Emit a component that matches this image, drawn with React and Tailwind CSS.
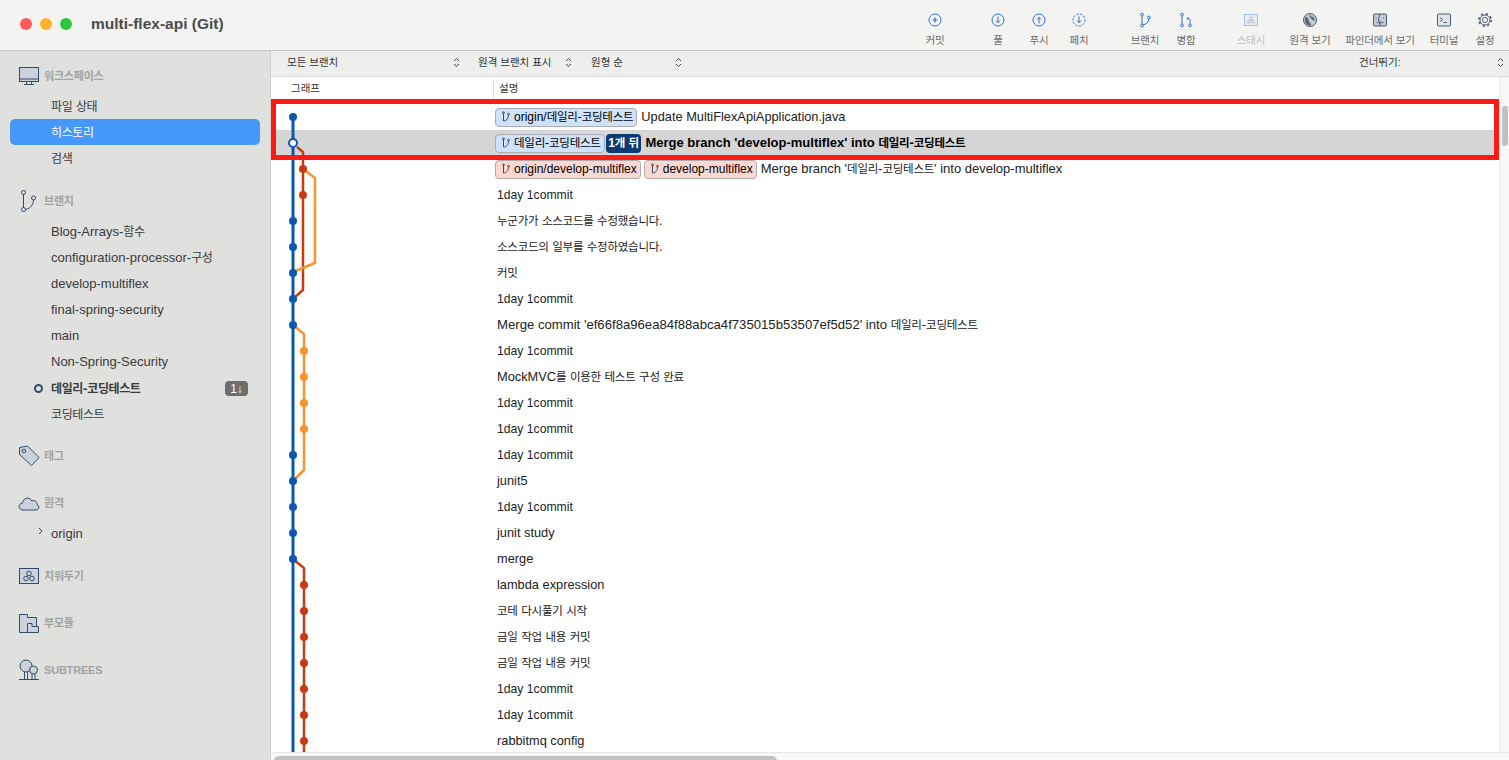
import React from "react";

const FONT = { fontFamily: '"Liberation Sans", "Noto Sans CJK KR", sans-serif' };
const NAVY = "#34496b";
const SOFT = "#ccd2dc";

const TOOLBAR = [
  { label: "커밋", icon: "commit", cls: "w-[40px]" },
  { label: "풀", icon: "pull", cls: "w-[40px] ml-[23px]" },
  { label: "푸시", icon: "push", cls: "w-[40px] ml-px" },
  { label: "페치", icon: "fetch", cls: "w-[40px]" },
  { label: "브랜치", icon: "branch", cls: "w-[40px] ml-[26px]" },
  { label: "병합", icon: "merge", cls: "w-[40px] ml-px" },
  { label: "스태시", icon: "stash", cls: "w-[40px] ml-[25px] opacity-40" },
  { label: "원격 보기", icon: "globe", cls: "w-[60px] ml-[9px]" },
  { label: "파인더에서 보기", icon: "finder", cls: "w-[72px] ml-[4px]" },
  { label: "터미널", icon: "terminal", cls: "w-[40px] ml-[8px]" },
  { label: "설정", icon: "gear", cls: "w-[40px] ml-px" },
];

const BRANCHES = [
  "Blog-Arrays-함수",
  "configuration-processor-구성",
  "develop-multiflex",
  "final-spring-security",
  "main",
  "Non-Spring-Security",
];

const COMMITS = [
  "Update MultiFlexApiApplication.java",
  "Merge branch 'develop-multiflex' into 데일리-코딩테스트",
  "Merge branch '데일리-코딩테스트' into develop-multiflex",
  "1day 1commit",
  "누군가가 소스코드를 수정했습니다.",
  "소스코드의 일부를 수정하였습니다.",
  "커밋",
  "1day 1commit",
  "Merge commit 'ef66f8a96ea84f88abca4f735015b53507ef5d52' into 데일리-코딩테스트",
  "1day 1commit",
  "MockMVC를 이용한 테스트 구성 완료",
  "1day 1commit",
  "1day 1commit",
  "1day 1commit",
  "junit5",
  "1day 1commit",
  "junit study",
  "merge",
  "lambda expression",
  "코테 다시풀기 시작",
  "금일 작업 내용 커밋",
  "금일 작업 내용 커밋",
  "1day 1commit",
  "1day 1commit",
  "rabbitmq config",
];

const BLUE_DOTS = [117, 221, 247, 273, 299, 325, 455, 481, 507, 533, 559];
const RED_DOTS = [585, 611, 637, 663, 689, 715, 741];
const ORANGE_DOTS = [351, 377, 403, 429];

// hangul runs are set tighter than the latin ones around them
const Txt = ({ text, kr = "text-[11.5px] tracking-[-0.25px]" }) => (
  <span>
    {text.split(/([\uAC00-\uD7A3]+)/).map((part, i) =>
      i % 2 === 1 ? (
        <span key={i} className={kr}>
          {part}
        </span>
      ) : (
        part
      )
    )}
  </span>
);

const ToolIcon = ({ name }) => {
  const blue = "#2a6fdb";
  const gray = "#4c5a70";
  return (
    <svg width="20" height="20" viewBox="0 0 20 20" fill="none">
      {name === "commit" && (
        <>
          <circle cx="10" cy="10" r="6" stroke={blue} />
          <path d="M7.5 10h5M10 7.5v5" stroke={blue} strokeWidth="1.2" />
        </>
      )}
      {name === "pull" && (
        <>
          <circle cx="10" cy="10" r="6" stroke={blue} />
          <path d="M10 6.5v6M8 10.5l2 2.2 2-2.2" stroke={blue} />
        </>
      )}
      {name === "push" && (
        <>
          <circle cx="10" cy="10" r="6" stroke={blue} />
          <path d="M10 13.5v-6M8 9.5l2-2.2 2 2.2" stroke={blue} />
        </>
      )}
      {name === "fetch" && (
        <>
          <circle cx="10" cy="10" r="6" stroke={blue} strokeDasharray="2.2 1.4" />
          <path d="M10 6.5v6M8 10.5l2 2.2 2-2.2" stroke={blue} />
        </>
      )}
      {name === "branch" && (
        <>
          <circle cx="7" cy="4.5" r="1.4" stroke={blue} />
          <circle cx="7" cy="15.5" r="1.4" stroke={blue} />
          <circle cx="14" cy="7.5" r="1.4" stroke={blue} />
          <path d="M7 6v8M8.2 14.8c3.4-.6 5.6-2.8 5.8-5.9" stroke={blue} />
        </>
      )}
      {name === "merge" && (
        <>
          <circle cx="6" cy="4.5" r="1.4" stroke={blue} />
          <circle cx="6" cy="15.5" r="1.4" stroke={blue} />
          <circle cx="14" cy="15.5" r="1.4" stroke={blue} />
          <path d="M6 6v8M14 14v-3.5c0-1.5-1-2-2.5-2M12.5 7L11 8.5l1.5 1.5" stroke={blue} />
        </>
      )}
      {name === "stash" && (
        <>
          <rect x="3.5" y="4.5" width="13" height="11" stroke={blue} fill="#dfe7f5" />
          <circle cx="10" cy="8.5" r="1.5" stroke={gray} strokeWidth=".8" />
          <circle cx="8" cy="11.8" r="1.5" stroke={gray} strokeWidth=".8" />
          <circle cx="12" cy="11.8" r="1.5" stroke={gray} strokeWidth=".8" />
        </>
      )}
      {name === "globe" && (
        <>
          <circle cx="10" cy="10" r="6.5" fill="#c3c8d0" stroke={gray} />
          <path d="M5 7c2 0 3.500 1 3.500 3s2 2 2.500 5.500c-2.500.5-5-1-6-3.500zM10 4c0 2 1.500 3 3.500 3 .5 1 1 2 1 3.500-2 0-3-1-3.500-2.500-1.500-.5-2-2-1-4z" fill="#5c6676" />
        </>
      )}
      {name === "finder" && (
        <>
          <rect x="3.5" y="4" width="13" height="12" rx="1" fill="#c5ccd8" stroke={gray} />
          <path d="M10 4c-1 3-1.5 5-1.5 7H10v5" stroke={gray} />
          <path d="M6 7.5v1M13.5 7.5v1M6.5 12c2 1.4 5 1.4 7 0" stroke={gray} />
        </>
      )}
      {name === "terminal" && (
        <>
          <rect x="3.5" y="4" width="13" height="12" rx="1" fill="#dfe3ea" stroke={gray} />
          <path d="M6 7.5l2.5 2-2.5 2M9.5 12.5H13" stroke={gray} />
        </>
      )}
      {name === "gear" && (
        <>
          <circle cx="10" cy="10" r="2.5" stroke={gray} />
          <circle cx="10" cy="10" r="5" stroke={gray} />
          <circle cx="10" cy="10" r="6.2" stroke={gray} strokeWidth="1.6" strokeDasharray="2.2 2.67" />
        </>
      )}
    </svg>
  );
};

const Updown = () => (
  <svg width="7" height="11" viewBox="0 0 7 11" fill="none" stroke="#444" strokeWidth="1">
    <path d="M1 4l2.5-2.5L6 4M1 7l2.5 2.5L6 7" />
  </svg>
);

const BranchGlyph = () => (
  <svg width="10" height="12" viewBox="0 0 10 12" fill="none" stroke="#3c4a60" strokeWidth="1" className="shrink-0">
    <path d="M2.5 2v8M2.5 10c3 0 5-2.5 5-6" />
    <circle cx="2.5" cy="1.8" r=".9" />
    <circle cx="7.5" cy="3.2" r=".9" />
  </svg>
);

const Badge = ({ tone, text }) => (
  <span
    className={`flex items-center gap-[3px] h-[19px] pl-[5px] pr-[3px] rounded-[4px] border border-[#a9adb3] text-[12px] text-black whitespace-nowrap ${
      tone === "red" ? "bg-[#fdd8d0]" : "bg-[#cfe2fb]"
    }`}
  >
    <BranchGlyph />
    <Txt text={text} />
  </span>
);

const SideIcon = ({ name }) => (
  <svg width="22" height="22" viewBox="0 0 22 22" fill="none" stroke={NAVY} strokeWidth="1" className="shrink-0">
    {name === "monitor" && (
      <>
        <rect x="1.5" y="2.5" width="19" height="14" fill={SOFT} />
        <path d="M1.5 14h19M8.5 16.5v3M13.5 16.5v3M6 19.5h10" />
      </>
    )}
    {name === "branch" && (
      <>
        <circle cx="5.5" cy="2.5" r="2" />
        <circle cx="5.5" cy="19.5" r="2" />
        <circle cx="15.5" cy="8" r="2" />
        <path d="M5.5 4.5v13M7.5 19.3c5-.5 7.8-4.8 8-9.3" />
      </>
    )}
    {name === "tag" && (
      <>
        <path d="M1.5 2.5l8-1.5L21 12.5l-7.5 8-12-11z" fill={SOFT} />
        <circle cx="6" cy="6" r="1.8" />
      </>
    )}
    {name === "cloud" && (
      <path d="M5 18c-5 0-5-6.5-.5-7 .5-5 7-7 9.5-2 3-1.5 5.5 1 5 3.5 3 1.5 2 5.5-1 5.5z" fill={SOFT} />
    )}
    {name === "stash" && (
      <>
        <rect x="1.5" y="3.5" width="19" height="15" fill={SOFT} />
        <circle cx="11" cy="8.5" r="2.3" />
        <circle cx="8" cy="13.5" r="2.3" />
        <circle cx="14" cy="13.5" r="2.3" />
      </>
    )}
    {name === "submodule" && (
      <>
        <path d="M1.5 2.5h8v3h9v15h-17z" fill={SOFT} />
        <path d="M9.5 14.5v-3H14v3h6.5v6h-11z" fill={SOFT} />
      </>
    )}
    {name === "tree" && (
      <>
        <circle cx="8" cy="7" r="6" fill={SOFT} />
        <circle cx="15.5" cy="11" r="4" fill={SOFT} />
        <path d="M6.5 13v7M9.5 13v7M14 15v5M17 15v5M1 20.5h20" />
      </>
    )}
  </svg>
);

const SectionHead = ({ icon, label, cls }) => (
  <div className={`flex items-center h-6 pl-[18px] gap-[4px] ${cls}`}>
    <SideIcon name={icon} />
    <span className="text-[11px] font-bold tracking-[-0.2px] text-[#a2a2a2]">{label}</span>
  </div>
);

const SideRow = ({ children, active, cls = "" }) => (
  <div
    className={`flex items-center h-[26px] mx-[10px] pl-[41px] rounded-[5px] text-[13px] ${cls} ${
      active ? "bg-[#4699fb] text-white" : "text-[#3b3b3b]"
    }`}
  >
    {children}
  </div>
);

const SideText = ({ text }) => <Txt text={text} kr="text-[12px] tracking-[-0.4px]" />;

const Sidebar = () => (
  <aside className="w-[271px] shrink-0 bg-[#e0e0de] border-r border-[#cfcfcf] pt-[13px]">
    <SectionHead icon="monitor" label="워크스페이스" />
    <div className="mt-[5px] mb-[18px]">
      <SideRow cls="pt-px">
        <SideText text="파일 상태" />
      </SideRow>
      <SideRow active cls="pt-px">
        <SideText text="히스토리" />
      </SideRow>
      <SideRow cls="pt-px">
        <SideText text="검색" />
      </SideRow>
    </div>
    <SectionHead icon="branch" label="브랜치" />
    <div className="mt-[6px]">
      {BRANCHES.map((b) => (
        <SideRow key={b}>
          <SideText text={b} />
        </SideRow>
      ))}
      <div className="relative">
        <span className="absolute left-[34px] top-[9px] size-[9px] rounded-full border-2 border-[#34496b]" />
        <SideRow cls="pt-px">
          <span className="font-bold flex-1">
            <SideText text="데일리-코딩테스트" />
          </span>
          <span className="flex items-center justify-center w-[23px] h-[15px] mr-[12px] rounded-[4px] bg-[#6e6e6e] text-white text-[12px]">
            1↓
          </span>
        </SideRow>
      </div>
      <SideRow cls="pt-px">
        <SideText text="코딩테스트" />
      </SideRow>
    </div>
    <SectionHead icon="tag" label="태그" cls="mt-[17px]" />
    <SectionHead icon="cloud" label="원격" cls="mt-[23px]" />
    <div className="relative mt-[5px]">
      <svg width="6" height="8" viewBox="0 0 6 8" fill="none" stroke={NAVY} className="absolute left-[38px] top-[7px]">
        <path d="M1 1l3 3-3 3" />
      </svg>
      <SideRow cls="pt-px">origin</SideRow>
    </div>
    <SectionHead icon="stash" label="치워두기" cls="mt-[18px]" />
    <SectionHead icon="submodule" label="부모듈" cls="mt-[23px]" />
    <SectionHead icon="tree" label="SUBTREES" cls="mt-[23px]" />
  </aside>
);

const Graph = () => (
  <svg width="60" height="648" viewBox="271 104 60 648" fill="none" className="absolute left-0 top-0">
    <path d="M293 117V752" stroke="#0b57ad" strokeWidth="3" />
    <path d="M297 147l6 5V290l-10 9" stroke="#c83a12" strokeWidth="2.5" />
    <path d="M303 169l12 9V263l-22 9" stroke="#f9922a" strokeWidth="2.5" />
    <path d="M293 325l11 9V470l-11 11" stroke="#f9922a" strokeWidth="2.5" />
    <path d="M293 559l11 9V752" stroke="#c83a12" strokeWidth="2.5" />
    {BLUE_DOTS.map((y) => (
      <circle key={y} cx="293" cy={y} r="4" fill="#0b57ad" />
    ))}
    <circle cx="293" cy="143" r="4" fill="#fff" stroke="#0b57ad" strokeWidth="2" />
    {[169, 195, ...RED_DOTS].map((y) => (
      <circle key={y} cx={y < 300 ? 303 : 304} cy={y} r="4" fill="#c83a12" />
    ))}
    {ORANGE_DOTS.map((y) => (
      <circle key={y} cx="304" cy={y} r="4" fill="#f9922a" />
    ))}
  </svg>
);

const CommitRow = ({ index, text }) => {
  // the hash and the "1day" rows run a bit wider/narrower than plain text in the original
  let size = "text-[12.8px]";
  if (text === "1day 1commit") size = "text-[12.2px]";
  if (index === 1 || index === 2) size = "text-[13px]";
  if (index === 8) size = "text-[13.15px]";

  return (
    <div
      className={`flex items-center gap-[4px] h-[26px] pl-[224px] text-[#222] whitespace-nowrap ${size} ${
        index === 1 ? "bg-[#d5d5d5] font-bold text-black" : ""
      }`}
    >
      {index === 0 && <Badge text="origin/데일리-코딩테스트" />}
      {index === 1 && (
        <span className="flex items-center font-normal">
          <Badge text="데일리-코딩테스트" />
          <span className="flex items-center h-[19px] px-[2.5px] ml-px rounded-[4px] bg-[#0b3a73] text-[12px] text-white font-bold">
            <Txt text="1개 뒤" />
          </span>
        </span>
      )}
      {index === 2 && (
        <span className="flex gap-[3px]">
          <Badge tone="red" text="origin/develop-multiflex" />
          <Badge tone="red" text="develop-multiflex" />
        </span>
      )}
      <span className={index > 2 ? "ml-[2px]" : ""}>
        <Txt text={text} />
      </span>
    </div>
  );
};

export default function App() {
  return (
    <div className="relative flex flex-col w-[1509px] h-[760px] overflow-hidden bg-white" style={FONT}>
      {/* title bar */}
      <header className="flex items-center h-[51px] shrink-0 bg-[#f3f3f2] border-b border-[#c4c4c4]">
        <div className="flex items-center gap-2 pl-[20px] mb-[2px]">
          <span className="size-3 rounded-full bg-[#fc5b57]" />
          <span className="size-3 rounded-full bg-[#fdb12d]" />
          <span className="size-3 rounded-full bg-[#2bc840]" />
        </div>
        <h1 className="ml-[19px] mb-[2px] text-[15.5px] font-bold text-[#4b4b4b]">multi-flex-api (Git)</h1>
        <div className="flex ml-auto mr-[4px]">
          {TOOLBAR.map((t) => (
            <div key={t.label} className={`flex flex-col items-center pt-[8px] ${t.cls}`}>
              <ToolIcon name={t.icon} />
              <span className="mt-[3px] text-[10.5px] tracking-[-0.1px] text-[#6b6b6b] whitespace-nowrap">{t.label}</span>
            </div>
          ))}
        </div>
      </header>

      <div className="flex flex-1 min-h-0">
        <Sidebar />

        <main className="flex flex-col flex-1 min-w-0">
          {/* filter bar */}
          <div className="flex items-center h-[26px] shrink-0 pb-[2px] bg-[#eeeeec] border-b border-[#dcdcdc] text-[10.5px] text-[#333]">
            <span className="ml-[16px] w-[166px]">모든 브랜치</span>
            <Updown />
            <span className="ml-[18px] w-[87px]">원격 브랜치 표시</span>
            <Updown />
            <span className="ml-[19px] w-[84px]">원형 순</span>
            <Updown />
            <span className="ml-auto w-[138px]">건너뛰기:</span>
            <span className="mr-[5px]">
              <Updown />
            </span>
          </div>

          <div className="flex flex-1 min-h-0">
            <div className="flex flex-col flex-1 min-w-0">
              {/* column header */}
              <div className="flex items-center h-[27px] shrink-0 pb-[4px] text-[10.5px] text-[#333]">
                <span className="ml-[20px] w-[202px]">그래프</span>
                <span className="h-[18px] border-l border-[#ddd] pl-[5px] flex items-center">설명</span>
              </div>
              <div className="relative flex-1 overflow-hidden">
                {COMMITS.map((c, i) => (
                  <CommitRow key={i} index={i} text={c} />
                ))}
                <Graph />
              </div>
            </div>
            {/* vertical scrollbar */}
            <div className="w-[10px] shrink-0 bg-[#f7f7f7] border-l border-[#ececec] pt-[29px] pl-[2px]">
              <div className="w-[6px] h-[40px] rounded-full bg-[#c1c1c1]" />
            </div>
          </div>

          {/* horizontal scrollbar */}
          <div className="h-[8px] shrink-0 bg-[#f7f7f7] border-t border-[#e6e6e6] pl-[3px] pt-[3px]">
            <div className="w-[503px] h-[5px] rounded-t-full bg-[#c1c1c1]" />
          </div>
        </main>
      </div>

      {/* red annotation box */}
      <div className="absolute left-[271px] top-[99px] w-[1228px] h-[61px] border-[5px] border-[#fb1a14] pointer-events-none" />
    </div>
  );
}
